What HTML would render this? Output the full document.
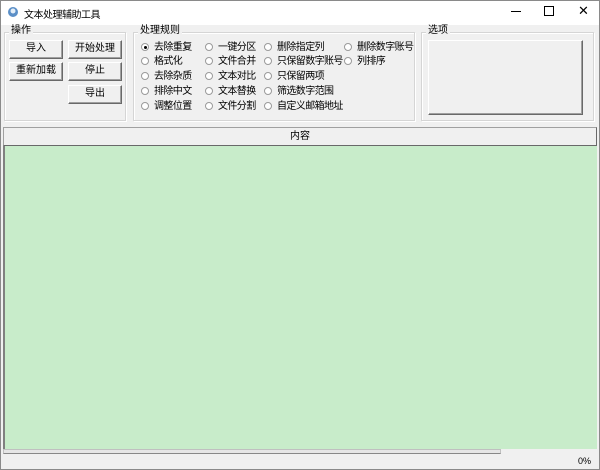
<!DOCTYPE html>
<html><head><meta charset="utf-8"><style>
*{margin:0;padding:0;box-sizing:border-box}
body{width:600px;height:470px;overflow:hidden;background:#f0f0f0;font-family:"Liberation Sans","Noto Sans CJK SC",sans-serif;font-size:10px;color:#000;position:relative}
.a{position:absolute}
.win{left:0;top:0;width:600px;height:470px;border:1px solid #8a8a8a}
.title{left:1px;top:1px;width:598px;height:24px;background:#fff}
.gb{border:1px solid #d5d5d5;box-shadow:inset 1px 1px 0 #fff,1px 1px 0 #fff}
.gl{background:#f0f0f0;padding:0 2px;font-size:10px;line-height:12px}
.btn{background:#f0f0f0;border:1px solid;border-color:#fff #696969 #696969 #fff;box-shadow:inset -1px -1px 0 #a0a0a0;text-align:center;line-height:16px;height:19px;width:54px}
.r{line-height:14px;white-space:nowrap;letter-spacing:-0.6px}
.r i{display:inline-block;width:8px;height:8px;border-radius:50%;border:1px solid #9a9a9a;background:#fff;margin-right:5px;vertical-align:-1px;position:relative}
.r i.on:after{content:"";position:absolute;left:1.5px;top:1.5px;width:3px;height:3px;border-radius:50%;background:#000}
</style></head><body>
<div class="a win"></div>
<div class="a title"></div>
<svg class="a" style="left:7px;top:6px" width="12" height="12"><circle cx="6" cy="6" r="5" fill="#5b8fc7"/><circle cx="6" cy="5" r="2.5" fill="#e4eef8"/></svg>
<div class="a" style="left:24px;top:6px;letter-spacing:-0.5px">文本处理辅助工具</div>
<div class="a" style="left:511px;top:11px;width:10px;height:1px;background:#000"></div>
<div class="a" style="left:544px;top:6px;width:10px;height:10px;border:1px solid #000"></div>
<div class="a" style="left:578px;top:3px;font-size:13px">✕</div>

<div class="a gb" style="left:4px;top:32px;width:122px;height:89px"></div>
<div class="a gl" style="left:9px;top:25px">操作</div>
<div class="a btn" style="left:9px;top:40px">导入</div>
<div class="a btn" style="left:68px;top:40px">开始处理</div>
<div class="a btn" style="left:9px;top:62px">重新加载</div>
<div class="a btn" style="left:68px;top:62px">停止</div>
<div class="a btn" style="left:68px;top:85px">导出</div>

<div class="a gb" style="left:133px;top:32px;width:282px;height:89px"></div>
<div class="a gl" style="left:138px;top:25px">处理规则</div>
<div class="a r" style="left:141px;top:41px"><i class="on"></i>去除重复</div>
<div class="a r" style="left:141px;top:55px"><i></i>格式化</div>
<div class="a r" style="left:141px;top:70px"><i></i>去除杂质</div>
<div class="a r" style="left:141px;top:85px"><i></i>排除中文</div>
<div class="a r" style="left:141px;top:100px"><i></i>调整位置</div>
<div class="a r" style="left:205px;top:41px"><i></i>一键分区</div>
<div class="a r" style="left:205px;top:55px"><i></i>文件合并</div>
<div class="a r" style="left:205px;top:70px"><i></i>文本对比</div>
<div class="a r" style="left:205px;top:85px"><i></i>文本替换</div>
<div class="a r" style="left:205px;top:100px"><i></i>文件分割</div>
<div class="a r" style="left:264px;top:41px"><i></i>删除指定列</div>
<div class="a r" style="left:264px;top:55px"><i></i>只保留数字账号</div>
<div class="a r" style="left:264px;top:70px"><i></i>只保留两项</div>
<div class="a r" style="left:264px;top:85px"><i></i>筛选数字范围</div>
<div class="a r" style="left:264px;top:100px"><i></i>自定义邮箱地址</div>
<div class="a r" style="left:344px;top:41px"><i></i>删除数字账号</div>
<div class="a r" style="left:344px;top:55px"><i></i>列排序</div>

<div class="a gb" style="left:421px;top:32px;width:173px;height:89px"></div>
<div class="a gl" style="left:426px;top:25px">选项</div>
<div class="a" style="left:428px;top:40px;width:155px;height:75px;border:1px solid;border-color:#fff #696969 #696969 #fff;box-shadow:inset -1px -1px 0 #a0a0a0"></div>

<div class="a" style="left:3px;top:127px;width:594px;height:19px;border:1px solid;border-color:#a0a0a0 #696969 #696969 #a0a0a0;background:#f0f0f0;text-align:center;line-height:17px">内容</div>
<div class="a" style="left:3px;top:146px;width:594px;height:303px;background:#c8ecca;border-left:2px solid #808080"></div>
<div class="a" style="left:3px;top:449px;width:498px;height:5px;border:1px solid #c0c0c0;border-bottom-color:#888;background:#e6e6e6"></div>
<div class="a" style="left:578px;top:456px;font-size:9px">0%</div>
</body></html>
